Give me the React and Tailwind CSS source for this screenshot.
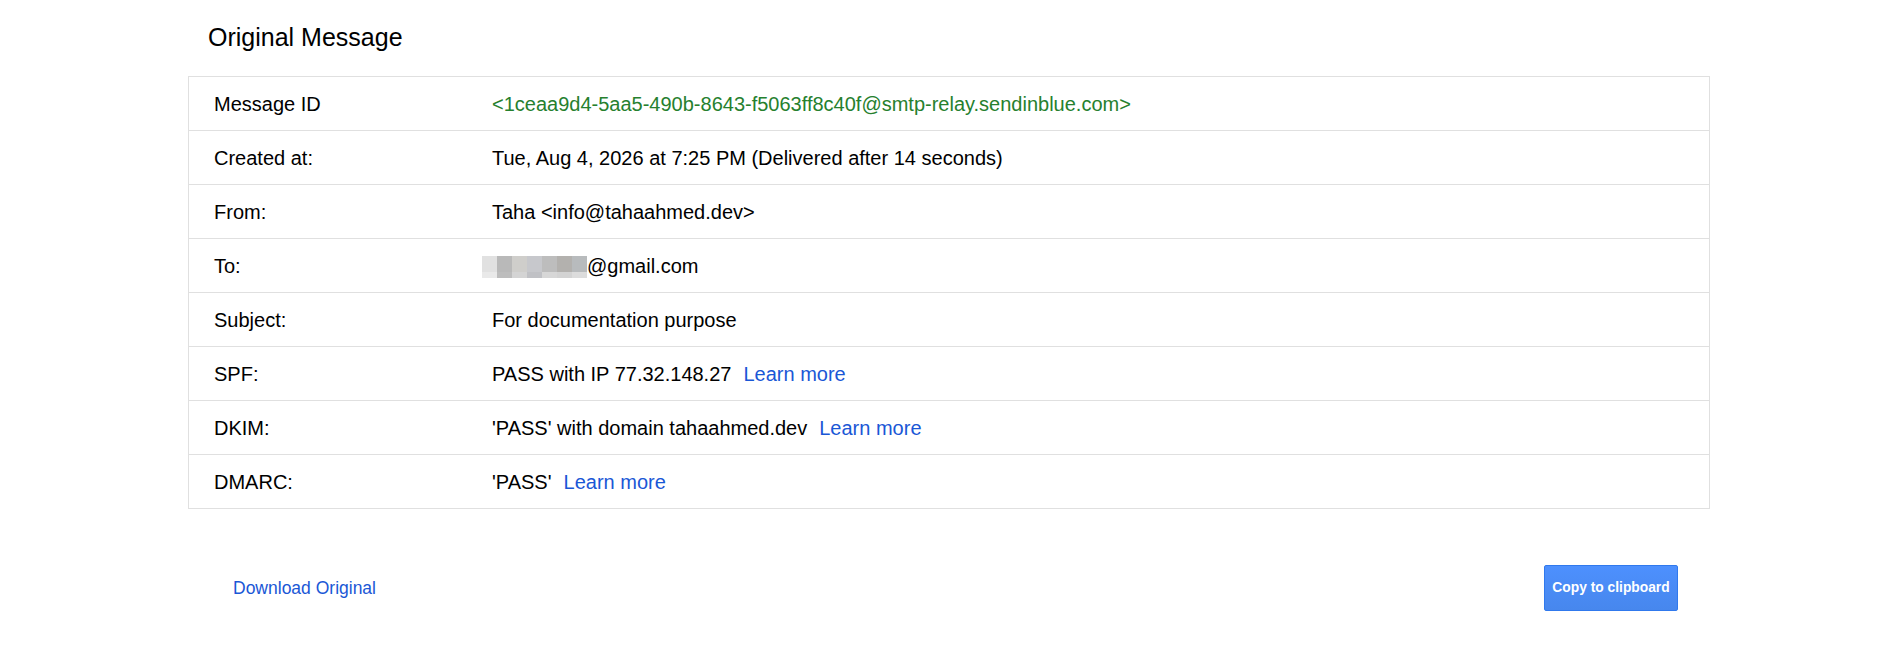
import React from "react";

const LINK = "text-[#1a57d6]";

function Blurred() {
  // pixelated username, two bands of mosaic blocks
  const top = ["#e1e1e1", "#b9b9b9", "#cfcecb", "#c7c8cc", "#bdbdbd", "#b3b1ae", "#b8bbbd"];
  const bottom = ["#e9e9e9", "#bdbdbd", "#d4d4d4", "#c0c1c5", "#d7d7d7", "#d3d3d3", "#dcdcdc"];
  return (
    <span className="-ml-[10px] inline-flex translate-y-[1px] flex-col align-middle">
      <span className="flex">
        {top.map((c, i) => (
          <span key={i} className="h-[16px] w-[15px]" style={{ backgroundColor: c }} />
        ))}
      </span>
      <span className="flex">
        {bottom.map((c, i) => (
          <span key={i} className="h-[6px] w-[15px]" style={{ backgroundColor: c }} />
        ))}
      </span>
    </span>
  );
}

const rows = [
  {
    label: "Message ID",
    value: (
      <span className="text-[#26802e]">
        {"<1ceaa9d4-5aa5-490b-8643-f5063ff8c40f@smtp-relay.sendinblue.com>"}
      </span>
    ),
  },
  { label: "Created at:", value: "Tue, Aug 4, 2026 at 7:25 PM (Delivered after 14 seconds)" },
  { label: "From:", value: "Taha <info@tahaahmed.dev>" },
  {
    label: "To:",
    value: (
      <span className="flex items-center">
        <Blurred />
        <span>@gmail.com</span>
      </span>
    ),
  },
  { label: "Subject:", value: "For documentation purpose" },
  {
    label: "SPF:",
    value: (
      <>
        PASS with IP 77.32.148.27<a href="#" className={`ml-[12px] ${LINK}`}>Learn more</a>
      </>
    ),
  },
  {
    label: "DKIM:",
    value: (
      <>
        'PASS' with domain tahaahmed.dev<a href="#" className={`ml-[12px] ${LINK}`}>Learn more</a>
      </>
    ),
  },
  {
    label: "DMARC:",
    value: (
      <>
        'PASS'<a href="#" className={`ml-[12px] ${LINK}`}>Learn more</a>
      </>
    ),
  },
];

export default function App() {
  return (
    <div
      className="min-h-[654px] bg-white px-[188px] text-black"
      style={{ fontFamily: '"Liberation Sans", Arial, sans-serif' }}
    >
      <h1 className="pt-[23px] pl-[20px] text-[25px] leading-[28px] font-normal">Original Message</h1>

      <div className="mt-[25px] border border-[#e0e0e0]">
        {rows.map((r, i) => (
          <div
            key={r.label}
            className={`flex items-center text-[20px] ${
              i < rows.length - 1 ? "h-[54px] border-b border-[#e0e0e0]" : "h-[53px]"
            }`}
          >
            <div className="w-[303px] shrink-0 pl-[25px]">{r.label}</div>
            <div className="flex items-center">{r.value}</div>
          </div>
        ))}
      </div>

      <div className="mt-[56px] flex items-center justify-between pr-[32px] pl-[45px]">
        <a href="#" className={`text-[17.5px] ${LINK}`}>
          Download Original
        </a>
        <button className="h-[46px] w-[134px] rounded-[2px] border border-[#3079ed] bg-gradient-to-b from-[#4d90fe] to-[#4787ed] text-[13.8px] font-bold text-white">
          Copy to clipboard
        </button>
      </div>
    </div>
  );
}
